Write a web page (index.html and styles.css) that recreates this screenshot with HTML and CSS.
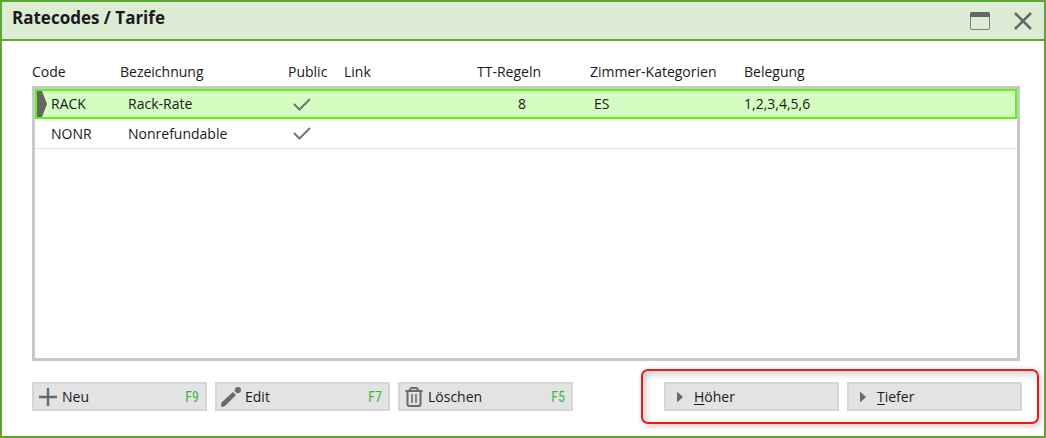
FILE: index.html
```html
<!DOCTYPE html>
<html lang="de">
<head>
    <meta charset="UTF-8">
    <meta name="viewport" content="width=device-width, initial-scale=1.0">
    <title>Ratecodes / Tarife</title>
    <link rel="stylesheet" href="styles.css">
</head>
<body>
    <div class="window">
        <header class="titlebar">
            <h1>Ratecodes / Tarife</h1>
            <button class="window-button" aria-label="Maximieren">
                <svg width="20" height="18" viewBox="0 0 20 18">
                    <rect x="0.5" y="0.5" width="19" height="17" rx="1.5" fill="none" stroke="#7c7f7a"/>
                    <path d="M0 5V2Q0 0 2 0H18Q20 0 20 2V5Z" fill="#666"/>
                </svg>
            </button>
            <button class="window-button" aria-label="Schließen">
                <svg width="18" height="18" viewBox="0 0 18 18">
                    <path d="M1 1L17 17M17 1L1 17" fill="none" stroke="#666" stroke-width="2.6"/>
                </svg>
            </button>
        </header>

        <main class="content">
            <!-- Liste der Ratecodes -->
            <table class="rates">
                <thead>
                    <tr>
                        <th>Code</th>
                        <th>Bezeichnung</th>
                        <th>Public</th>
                        <th>Link</th>
                        <th>TT-Regeln</th>
                        <th>Zimmer-Kategorien</th>
                        <th>Belegung</th>
                    </tr>
                </thead>
                <tbody>
                    <tr class="selected">
                        <td class="code">RACK</td>
                        <td class="name">Rack-Rate</td>
                        <td class="public">
                            <svg width="18" height="13" viewBox="0 0 18 13"><path d="M1 6L6.500 11.500L17 1" fill="none" stroke="#6c756a" stroke-width="2"/></svg>
                        </td>
                        <td></td>
                        <td class="rules">8</td>
                        <td class="category">ES</td>
                        <td>1,2,3,4,5,6</td>
                    </tr>
                    <tr>
                        <td class="code">NONR</td>
                        <td class="name">Nonrefundable</td>
                        <td class="public">
                            <svg width="18" height="13" viewBox="0 0 18 13"><path d="M1 6L6.500 11.500L17 1" fill="none" stroke="#777" stroke-width="2"/></svg>
                        </td>
                        <td></td>
                        <td class="rules"></td>
                        <td class="category"></td>
                        <td></td>
                    </tr>
                </tbody>
            </table>

            <!-- Aktionen -->
            <div class="actions">
                <button class="action">
                    <svg class="icon" width="20" height="20" viewBox="0 0 20 20"><path d="M10 1V19M1 10H19" stroke="#6a6a6a" stroke-width="2.400"/></svg>
                    <span>Neu</span>
                    <kbd>F9</kbd>
                </button>
                <button class="action">
                    <svg class="icon" width="20" height="20" viewBox="0 0 20 20">
                        <path d="M0 18.500L0.500 15.500L12 5L15 8L4 19L1.500 20Q0 20 0 18.500Z" fill="#6a6a6a"/>
                        <circle cx="17" cy="3" r="3" fill="#6a6a6a"/>
                        <path d="M13.500 3.500L15 1.500L18.500 5L16.500 6.500Z" fill="#6a6a6a"/>
                    </svg>
                    <span>Edit</span>
                    <kbd>F7</kbd>
                </button>
                <button class="action">
                    <svg class="icon" width="20" height="20" viewBox="0 0 20 20" fill="none" stroke="#6a6a6a">
                        <path d="M1.500 4H18.500" stroke-width="2"/>
                        <path d="M6 3.500Q6 1 8 1H12Q14 1 14 3.500" stroke-width="2"/>
                        <path d="M3.500 4V17Q3.500 19 5.500 19H14.500Q16.500 19 16.500 17V4" stroke-width="2"/>
                        <path d="M8 7V16M12 7V16" stroke-width="1.500"/>
                    </svg>
                    <span>Löschen</span>
                    <kbd>F5</kbd>
                </button>
                <div class="highlight">
                    <button class="action">
                        <svg class="icon" width="20" height="20" viewBox="0 0 20 20"><path d="M7 4.500L13 10L7 15.500Z" fill="#6a6a6a"/></svg>
                        <span><u>H</u>öher</span>
                    </button>
                    <button class="action">
                        <svg class="icon" width="20" height="20" viewBox="0 0 20 20"><path d="M7 4.500L13 10L7 15.500Z" fill="#6a6a6a"/></svg>
                        <span><u>T</u>iefer</span>
                    </button>
                </div>
            </div>
        </main>
    </div>
</body>
</html>
```

FILE: styles.css
```css
* {
    box-sizing: border-box;
}
body {
    margin: 0;
    font-family: 'Open Sans', 'Noto Sans', sans-serif;
    font-size: 14px;
    line-height: 18px;
    color: #1a1a1a;
}
.window {
    display: flex;
    flex-direction: column;
    min-height: 100vh;
    border: 2px solid #5aa832;
    background: #fff;
}
.titlebar {
    display: flex;
    align-items: center;
    height: 39px;
    padding: 0 12px 0 10px;
    background: #ddecd5;
    border-bottom: 2px solid #5aa832;
}
h1 {
    flex: 1;
    margin: 0;
    padding-bottom: 6px;
    font-size: 17px;
    font-weight: 700;
    line-height: 20px;
}
.window-button {
    display: flex;
    margin-left: 24px;
    padding: 0;
    border: none;
    background: none;
    cursor: pointer;
}
.content {
    flex: 1;
    display: flex;
    flex-direction: column;
    padding: 22px 5px 12px 30px;
}
.rates {
    flex: 1;
    display: flex;
    flex-direction: column;
    margin-right: 19px;
}
.rates tr {
    display: grid;
    grid-template-columns: 85px 168px 56px 133px 113px 154px 1fr;
    align-items: center;
}
.rates th,
.rates td {
    padding: 0;
    text-align: left;
    font-weight: normal;
}
.rates thead tr {
    height: 23px;
    align-items: start;
    grid-template-columns: 88px 168px 56px 133px 113px 154px 1fr;
}
.rates tbody {
    flex: 1;
    display: block;
    border: 3px solid #c8c8c8;
}
.rates tbody tr {
    height: 30px;
    border-bottom: 1px solid #e4e4e4;
}
.rates tbody .selected {
    position: relative;
    border-bottom: none;
    background: #d5fdc2;
    box-shadow: inset 0 0 0 2px #55fa0c;
}
/* Zeiger auf die aktuelle Zeile */
.selected::before {
    content: "";
    position: absolute;
    left: 2px;
    top: 2px;
    width: 10px;
    height: 26px;
    background: #666;
    clip-path: polygon(0 0, 50% 0, 100% 50%, 50% 100%, 0 100%);
}
.rates .code {
    padding-left: 16px;
}
.rates .name {
    padding-left: 8px;
}
.rates .public {
    padding-left: 5px;
}
.rates .public svg {
    display: block;
}
.rates .rules {
    padding-right: 64px;
    text-align: right;
}
.rates .category {
    padding-left: 4px;
}
.actions {
    display: flex;
    align-items: center;
    gap: 8px;
    margin-top: 8px;
}
.action {
    display: flex;
    align-items: center;
    gap: 4px;
    width: 175px;
    height: 29px;
    padding: 0 6px 0 4px;
    border: 2px solid #d6d6d6;
    background: #e3e3e3;
    color: #1a1a1a;
    font: inherit;
    cursor: pointer;
}
.action span {
    flex: 1;
    text-align: left;
}
.action u {
    text-underline-offset: 2px;
}
.action kbd {
    font-family: 'Roboto Condensed', Roboto, sans-serif;
    font-size: 14px;
    color: #3db83d;
}
.highlight {
    display: flex;
    gap: 8px;
    margin-left: auto;
    padding: 11px 15px 11px 21px;
    border: 2px solid #f51414;
    border-radius: 7px;
    box-shadow: 2px 2px 6px rgba(0, 0, 0, 0.2), inset 3px 3px 7px rgba(0, 0, 0, 0.2);
}
```
